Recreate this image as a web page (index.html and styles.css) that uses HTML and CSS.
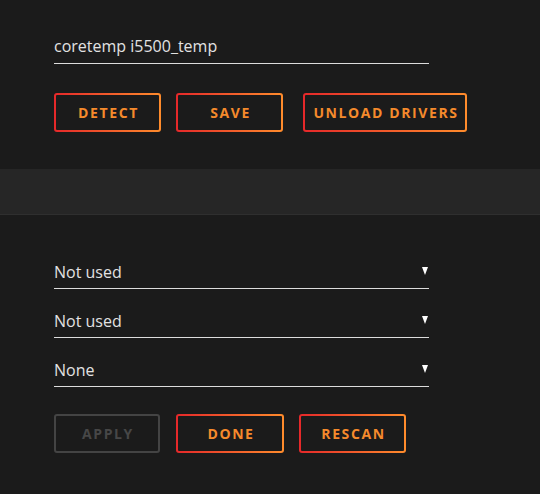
FILE: index.html
```html
<!DOCTYPE html>
<html lang="en">
<head>
    <meta charset="UTF-8">
    <meta name="viewport" content="width=device-width, initial-scale=1.0">
    <title>Sensors</title>
    <link rel="stylesheet" href="styles.css">
</head>
<body>
    <!-- driver section -->
    <div class="panel top">
        <div class="field">coretemp i5500_temp</div>
        <div class="btn-row">
            <button class="btn w-detect">DETECT</button>
            <button class="btn w-save">SAVE</button>
            <button class="btn w-unload">UNLOAD DRIVERS</button>
        </div>
    </div>

    <div class="band"></div>

    <!-- sensor selection -->
    <div class="panel bottom">
        <div class="field select"><span>Not used</span><span class="arrow"></span></div>
        <div class="field select"><span>Not used</span><span class="arrow"></span></div>
        <div class="field select"><span>None</span><span class="arrow"></span></div>
        <div class="btn-row">
            <button class="btn disabled w-apply">APPLY</button>
            <button class="btn w-done">DONE</button>
            <button class="btn w-rescan">RESCAN</button>
        </div>
    </div>
</body>
</html>
```

FILE: styles.css
```css
* {
    margin: 0;
    padding: 0;
    box-sizing: border-box;
    font-family: 'Open Sans', 'Noto Sans', sans-serif;
}

body {
    background: #1b1b1b;
    color: #e2e2e2;
    width: 540px;
    height: 494px;
    overflow: hidden;
}

.panel {
    padding: 0 54px;
}

.panel.top {
    padding-top: 31px;
    padding-bottom: 37px;
}

.panel.bottom {
    padding-top: 41px;
}

/* 输入框 / 下拉框 */
.field {
    width: 375px;
    height: 33px;
    line-height: 31px;
    font-size: 16px;
    font-weight: 500;
    border-bottom: 1px solid #dcdcdc;
}

.field.select {
    display: flex;
    justify-content: space-between;
    align-items: center;
    margin-bottom: 16px;
}

.arrow {
    width: 0;
    height: 0;
    margin-right: 1px;
    margin-top: -3px;
    border-left: 3.5px solid transparent;
    border-right: 3.5px solid transparent;
    border-top: 8px solid #fff;
}

/* 按钮 */
.btn-row {
    display: flex;
    margin-top: 29px;
}

.panel.bottom .btn-row {
    margin-top: 27px;
}

.btn {
    height: 39px;
    margin-right: 15px;
    border: 2px solid transparent;
    border-radius: 3px;
    background: linear-gradient(#1b1b1b, #1b1b1b) padding-box,
                linear-gradient(90deg, #e5282a, #ff8c2c) border-box;
    color: #f58a2c;
    font-size: 14px;
    font-weight: 700;
    letter-spacing: 1.6px;
    text-align: center;
    padding-left: 2px;
}

.btn.disabled {
    background: #1b1b1b;
    border-color: #444;
    color: #474747;
}

.w-detect { width: 107px; }
.w-save { width: 107px; margin-right: 20px; }
.w-unload { width: 164px; }
.w-apply { width: 106px; margin-right: 16px; }
.w-done { width: 108px; }
.w-rescan { width: 107px; }

.band {
    height: 46px;
    background: #262626;
    border-bottom: 1px solid #2f2f2f;
}
```
